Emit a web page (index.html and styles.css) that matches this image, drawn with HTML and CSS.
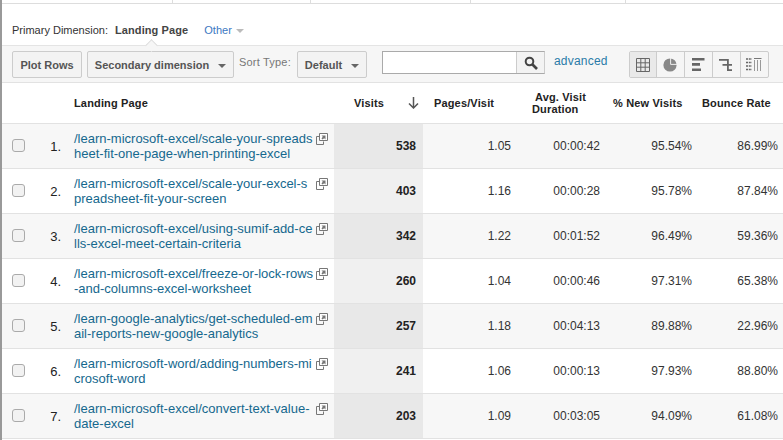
FILE: index.html
```html
<!DOCTYPE html>
<html lang="en">
<head>
  <meta charset="UTF-8">
  <title>Landing Pages</title>
  <link rel="stylesheet" href="styles.css">
</head>
<body>
  <div class="page">
    <div class="tabs">
      <div class="tab tab-a"></div>
      <div class="tab tab-b"></div>
      <div class="tab tab-c"></div>
      <div class="tab tab-d"></div>
    </div>

    <!-- Primary dimension -->
    <div class="dimension">
      <span>Primary Dimension:</span>
      <b>Landing Page</b>
      <a class="other">Other <i class="caret caret-light"></i></a>
    </div>

    <!-- Toolbar -->
    <div class="toolbar">
      <span class="notch"></span>
      <button class="btn btn-plot">Plot Rows</button>
      <button class="btn btn-secondary">Secondary dimension <i class="caret"></i></button>
      <span class="sort-label">Sort Type:</span>
      <button class="btn btn-sort">Default <i class="caret"></i></button>
      <div class="search">
        <div class="search-input"></div>
        <div class="search-btn">
          <svg width="14" height="14" viewBox="0 0 14 14"><circle cx="5.500" cy="5.500" r="3.800" fill="none" stroke="#444" stroke-width="2"/><path d="M8.500 8.500L13 13" stroke="#444" stroke-width="2.600"/></svg>
        </div>
      </div>
      <a class="advanced">advanced</a>
      <div class="views">
        <div class="view view-on">
          <svg width="14" height="14" viewBox="0 0 14 14"><path d="M.5.5h13v13H.5zM.5 4.800h13M.5 9.200h13M4.800.5v13M9.200.5v13" fill="none" stroke="#666"/></svg>
        </div>
        <div class="view">
          <svg width="14" height="14" viewBox="0 0 14 14"><circle cx="7" cy="7" r="6.600" fill="#888"/><path d="M7.600 0v6.400H14" fill="none" stroke="#eee"/></svg>
        </div>
        <div class="view">
          <svg width="13" height="13" viewBox="0 0 13 13"><path d="M0 0h12.500v2.500H0zM0 5h8v2.800H0zM0 10.500h9V13H0z" fill="#666"/></svg>
        </div>
        <div class="view">
          <svg width="14" height="14" viewBox="0 0 14 14"><path d="M0 1h9.500v1.800H0zM8 1h1.800v12H8zM3.500 6h4.500v1.800H3.500zM9.500 6H13v1.800H9.500zM8 11.200h5V13H8z" fill="#666"/></svg>
        </div>
        <div class="view">
          <svg width="16" height="13" viewBox="0 0 16 13"><path d="M0 1h6M0 4.500h6M0 8h6M0 11.500h6" stroke="#666" stroke-width="1.500" stroke-dasharray="2 .8" fill="none"/><path d="M8 .5h7.500" stroke="#777" fill="none"/><path d="M8.500 2v11M11.500 2v11M14.500 2v11" stroke="#999" fill="none"/></svg>
        </div>
      </div>
    </div>

    <!-- Data table -->
    <table class="report">
      <colgroup>
        <col class="c-check"><col class="c-num"><col class="c-page"><col class="c-visits">
        <col class="c-pages"><col class="c-dur"><col class="c-new"><col class="c-bounce">
      </colgroup>
      <thead>
        <tr>
          <th></th>
          <th></th>
          <th class="th-page">Landing Page</th>
          <th class="th-visits">
            <div class="visits-head">
              <span>Visits</span>
              <svg width="11" height="12" viewBox="0 0 11 12"><path d="M5.500 0v11M1 6.500l4.500 4.500 4.500-4.500" fill="none" stroke="#555" stroke-width="1.500"/></svg>
            </div>
          </th>
          <th class="th-pages">Pages/Visit</th>
          <th class="th-dur">Avg. Visit<br><span class="dur-2">Duration</span></th>
          <th class="th-new">% New Visits</th>
          <th class="th-bounce">Bounce Rate</th>
        </tr>
      </thead>
      <tbody>
        <tr>
          <td class="check"><span class="box"></span></td><td class="num">1.</td>
          <td class="page-cell"><div class="page-wrap"><a>/learn-microsoft-excel/scale-your-spreads<br>heet-fit-one-page-when-printing-excel</a><svg class="ext" width="12" height="12" viewBox="0 0 12 12"><use href="#ext"/></svg></div></td>
          <td class="visits">538</td><td>1.05</td><td>00:00:42</td><td>95.54%</td><td>86.99%</td>
        </tr>
        <tr>
          <td class="check"><span class="box"></span></td><td class="num">2.</td>
          <td class="page-cell"><div class="page-wrap"><a>/learn-microsoft-excel/scale-your-excel-s<br>preadsheet-fit-your-screen</a><svg class="ext" width="12" height="12" viewBox="0 0 12 12"><use href="#ext"/></svg></div></td>
          <td class="visits">403</td><td>1.16</td><td>00:00:28</td><td>95.78%</td><td>87.84%</td>
        </tr>
        <tr>
          <td class="check"><span class="box"></span></td><td class="num">3.</td>
          <td class="page-cell"><div class="page-wrap"><a>/learn-microsoft-excel/using-sumif-add-ce<br>lls-excel-meet-certain-criteria</a><svg class="ext" width="12" height="12" viewBox="0 0 12 12"><use href="#ext"/></svg></div></td>
          <td class="visits">342</td><td>1.22</td><td>00:01:52</td><td>96.49%</td><td>59.36%</td>
        </tr>
        <tr>
          <td class="check"><span class="box"></span></td><td class="num">4.</td>
          <td class="page-cell"><div class="page-wrap"><a>/learn-microsoft-excel/freeze-or-lock-rows<br>-and-columns-excel-worksheet</a><svg class="ext" width="12" height="12" viewBox="0 0 12 12"><use href="#ext"/></svg></div></td>
          <td class="visits">260</td><td>1.04</td><td>00:00:46</td><td>97.31%</td><td>65.38%</td>
        </tr>
        <tr>
          <td class="check"><span class="box"></span></td><td class="num">5.</td>
          <td class="page-cell"><div class="page-wrap"><a>/learn-google-analytics/get-scheduled-em<br>ail-reports-new-google-analytics</a><svg class="ext" width="12" height="12" viewBox="0 0 12 12"><use href="#ext"/></svg></div></td>
          <td class="visits">257</td><td>1.18</td><td>00:04:13</td><td>89.88%</td><td>22.96%</td>
        </tr>
        <tr>
          <td class="check"><span class="box"></span></td><td class="num">6.</td>
          <td class="page-cell"><div class="page-wrap"><a>/learn-microsoft-word/adding-numbers-mi<br>crosoft-word</a><svg class="ext" width="12" height="12" viewBox="0 0 12 12"><use href="#ext"/></svg></div></td>
          <td class="visits">241</td><td>1.06</td><td>00:00:13</td><td>97.93%</td><td>88.80%</td>
        </tr>
        <tr>
          <td class="check"><span class="box"></span></td><td class="num">7.</td>
          <td class="page-cell"><div class="page-wrap"><a>/learn-microsoft-excel/convert-text-value-<br>date-excel</a><svg class="ext" width="12" height="12" viewBox="0 0 12 12"><use href="#ext"/></svg></div></td>
          <td class="visits">203</td><td>1.09</td><td>00:03:05</td><td>94.09%</td><td>61.08%</td>
        </tr>
      </tbody>
    </table>
  </div>

  <svg width="0" height="0" class="defs">
    <symbol id="ext" viewBox="0 0 12 12">
      <path d="M3.500 3.500H.5v8h7V8.500" fill="none" stroke="#777"/>
      <path d="M3.500.5h8v7h-8z" fill="#fff" stroke="#777"/>
      <path d="M5.500 2.500h4v4l-1.300-1.300L6.500 6.500 5.500 5.500 6.800 3.800z" fill="#777"/>
    </symbol>
  </svg>
</body>
</html>
```

FILE: styles.css
```css
html, body {
  margin: 0;
  height: 440px;
  overflow: hidden;
  background-color: #fff;
}
body {
  font-family: "Liberation Sans", Arial, sans-serif;
  font-size: 11px;
  color: #222;
}
.page {
  border-left: 2px solid #999;
  height: 440px;
}
.defs {
  display: none;
}

/* top tabs */
.tabs {
  display: flex;
  height: 3px;
  border-bottom: 1px solid #ddd;
}
.tab {
  border-right: 1px solid #ddd;
}
.tab-a { width: 170px; }
.tab-b { width: 137px; }
.tab-c { width: 159px; }
.tab-d { width: 154px; }

/* primary dimension */
.dimension {
  display: flex;
  align-items: center;
  height: 41px;
  padding: 10px 0 0 10px;
  box-sizing: border-box;
  color: #333;
}
.dimension b {
  margin-left: 7px;
  color: #444;
  letter-spacing: 0.1px;
}
.other {
  margin-left: 16px;
  color: #3b78c2;
}

.caret {
  display: inline-block;
  width: 0;
  height: 0;
  margin-left: 6px;
  vertical-align: 1px;
  border-top: 4px solid #666;
  border-left: 4px solid transparent;
  border-right: 4px solid transparent;
}
.caret-light {
  margin-left: 1px;
  border-top-color: #bbb;
}

/* toolbar */
.toolbar {
  position: relative;
  display: flex;
  align-items: flex-start;
  height: 38px;
  padding-top: 5px;
  box-sizing: border-box;
  background-color: #f6f6f6;
  border-top: 1px solid #e4e4e4;
  border-bottom: 1px solid #e2e2e2;
}
.notch {
  position: absolute;
  left: 145px;
  top: -5px;
  width: 8px;
  height: 8px;
  background-color: #f6f6f6;
  border-top: 1px solid #ddd;
  border-left: 1px solid #ddd;
  transform: rotate(45deg);
}
.btn {
  height: 27px;
  padding: 0;
  font-family: inherit;
  font-size: 11px;
  font-weight: bold;
  color: #555;
  background-color: #f3f3f3;
  border: 1px solid #ccc;
  border-radius: 2px;
}
.btn-plot {
  width: 70px;
  margin-left: 10px;
}
.btn-secondary {
  width: 147px;
  margin-left: 5px;
}
.sort-label {
  width: 58px;
  margin-left: 5px;
  line-height: 22px;
  color: #777;
  letter-spacing: 0.2px;
}
.btn-sort {
  width: 70px;
}
.search {
  display: flex;
  width: 163px;
  height: 23px;
  margin-left: 15px;
  background-color: #fff;
  border: 1px solid #aaa;
  border-right-color: #ccc;
  box-sizing: border-box;
}
.search-input {
  flex: 1;
}
.search-btn {
  display: flex;
  align-items: center;
  justify-content: center;
  width: 27px;
  background-color: #f3f3f3;
  border-left: 1px solid #ccc;
}
.advanced {
  margin-left: 9px;
  line-height: 20px;
  font-size: 12px;
  color: #2a7ba8;
  letter-spacing: 0.2px;
}
.views {
  display: flex;
  margin-left: 21px;
  height: 25px;
  border: 1px solid #ccc;
  border-radius: 2px;
  background-color: #f5f5f5;
}
.view {
  display: flex;
  align-items: center;
  justify-content: center;
  width: 27px;
  border-left: 1px solid #ccc;
}
.view:first-child {
  width: 26px;
  border-left: 0;
}
.view-on {
  background-color: #e9e9e9;
}

/* report table */
.report {
  width: 781px;
  table-layout: fixed;
  border-collapse: collapse;
}
.c-check { width: 41px; }
.c-num { width: 27px; }
.c-page { width: 264px; }
.c-visits { width: 89px; }
.c-pages { width: 96px; }
.c-dur { width: 89px; }
.c-new { width: 92px; }
.c-bounce { width: 83px; }

.report th {
  height: 40px;
  padding: 1px 0 0;
  font-size: 11px;
  line-height: 12px;
  color: #222;
  letter-spacing: 0.15px;
  border-bottom: 1px solid #e2e2e2;
  box-sizing: border-box;
}
.th-page {
  padding-left: 4px !important;
  text-align: left;
}
.visits-head {
  display: flex;
  align-items: center;
  justify-content: space-between;
  padding: 0 4px 0 20px;
}
.th-pages {
  padding-left: 11px !important;
  text-align: left;
}
.th-dur {
  text-align: left;
  padding-left: 16px !important;
}
.dur-2 {
  margin-left: -3px;
}
.th-new {
  padding-left: 5px !important;
  text-align: left;
}
.th-bounce {
  padding-left: 2px !important;
  text-align: left;
}

.report td {
  height: 45px;
  padding: 1px 8px 0 0;
  font-size: 12px;
  color: #333;
  text-align: right;
  border-bottom: 1px solid #e2e2e2;
  box-sizing: border-box;
}
.report tbody tr:nth-child(odd) td {
  background-color: #f7f7f7;
}
.report td.visits {
  padding-right: 7px;
  font-weight: bold;
  color: #222;
  background-color: #f0f0f0;
}
.report tbody tr:nth-child(odd) td.visits {
  background-color: #e8e8e8;
}
.report td:last-child {
  padding-right: 5px;
}
.report td.check {
  padding: 0 0 0 10px;
  text-align: left;
}
.box {
  display: block;
  width: 11px;
  height: 11px;
  background-color: #f2f2f2;
  border: 1px solid #aaa;
  border-radius: 3px;
}
.report td.num {
  padding-right: 9px;
  font-size: 13px;
  color: #222;
}
.report td.page-cell {
  padding: 1px 0 0 4px;
  text-align: left;
}
.page-wrap {
  display: flex;
  justify-content: space-between;
  padding-right: 6px;
  font-size: 13px;
  line-height: 15px;
}
.page-wrap a {
  color: #15688e;
  white-space: nowrap;
}
.ext {
  margin-top: 2px;
}
```
